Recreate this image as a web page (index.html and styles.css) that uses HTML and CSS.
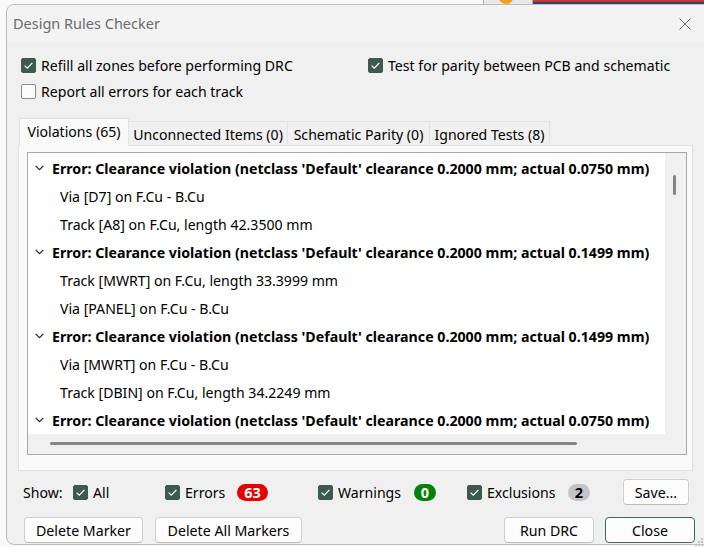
FILE: index.html
```html
<!DOCTYPE html>
<html>
<head>
<meta charset="utf-8">
<link rel="stylesheet" href="styles.css">
</head>
<body>
<div class="desk-app"><span class="desk-icon"></span></div>
<div class="desk-bar"></div>

<div class="window">
  <div class="titlebar">
    <span class="title">Design Rules Checker</span>
    <span class="close-btn">
      <svg width="12" height="12" viewBox="0 0 12 12"><path d="M0.5 0.5 L11.5 11.5 M11.5 0.5 L0.5 11.5" stroke="#6b6b6b" stroke-width="1" fill="none"/></svg>
    </span>
  </div>
  <div class="body">
    <div class="options">
      <div class="opt-col">
        <label class="cb"><span class="box on"><svg width="15" height="15" viewBox="0 0 15 15"><path d="M3.6 7.6 L6.3 10.2 L11.4 4.8" stroke="#fff" stroke-width="1.2" fill="none"/></svg></span>Refill all zones before performing DRC</label>
        <label class="cb"><span class="box"></span>Report all errors for each track</label>
      </div>
      <div class="opt-col">
        <label class="cb"><span class="box on"><svg width="15" height="15" viewBox="0 0 15 15"><path d="M3.6 7.6 L6.3 10.2 L11.4 4.8" stroke="#fff" stroke-width="1.2" fill="none"/></svg></span>Test for parity between PCB and schematic</label>
      </div>
    </div>

    <div class="tabs">
      <div class="tab active t1">Violations (65)</div>
      <div class="tab t2">Unconnected Items (0)</div>
      <div class="tab t3">Schematic Parity (0)</div>
      <div class="tab t4">Ignored Tests (8)</div>
    </div>

    <div class="panel">
      <div class="listbox">
        <div class="list-main">
          <div class="rows">
            <div class="row err"><svg class="chev" width="9" height="6" viewBox="0 0 9 6"><path d="M0.7 0.8 L4.5 4.6 L8.3 0.8" stroke="#222" stroke-width="1.2" fill="none"/></svg>Error: Clearance violation (netclass 'Default' clearance 0.2000 mm; actual 0.0750 mm)</div>
            <div class="row item">Via [D7] on F.Cu - B.Cu</div>
            <div class="row item">Track [A8] on F.Cu, length 42.3500 mm</div>
            <div class="row err"><svg class="chev" width="9" height="6" viewBox="0 0 9 6"><path d="M0.7 0.8 L4.5 4.6 L8.3 0.8" stroke="#222" stroke-width="1.2" fill="none"/></svg>Error: Clearance violation (netclass 'Default' clearance 0.2000 mm; actual 0.1499 mm)</div>
            <div class="row item">Track [MWRT] on F.Cu, length 33.3999 mm</div>
            <div class="row item">Via [PANEL] on F.Cu - B.Cu</div>
            <div class="row err"><svg class="chev" width="9" height="6" viewBox="0 0 9 6"><path d="M0.7 0.8 L4.5 4.6 L8.3 0.8" stroke="#222" stroke-width="1.2" fill="none"/></svg>Error: Clearance violation (netclass 'Default' clearance 0.2000 mm; actual 0.1499 mm)</div>
            <div class="row item">Via [MWRT] on F.Cu - B.Cu</div>
            <div class="row item">Track [DBIN] on F.Cu, length 34.2249 mm</div>
            <div class="row err"><svg class="chev" width="9" height="6" viewBox="0 0 9 6"><path d="M0.7 0.8 L4.5 4.6 L8.3 0.8" stroke="#222" stroke-width="1.2" fill="none"/></svg>Error: Clearance violation (netclass 'Default' clearance 0.2000 mm; actual 0.0750 mm)</div>
          </div>
          <div class="vscroll"><div class="vthumb"></div></div>
        </div>
        <div class="hscroll"><div class="hthumb"></div></div>
      </div>
    </div>

    <div class="show-row">
      <span class="show-label">Show:</span>
      <label class="cb"><span class="box on"><svg width="15" height="15" viewBox="0 0 15 15"><path d="M3.6 7.6 L6.3 10.2 L11.4 4.8" stroke="#fff" stroke-width="1.2" fill="none"/></svg></span>All</label>
      <label class="cb"><span class="box on"><svg width="15" height="15" viewBox="0 0 15 15"><path d="M3.6 7.6 L6.3 10.2 L11.4 4.8" stroke="#fff" stroke-width="1.2" fill="none"/></svg></span>Errors</label>
      <span class="badge-cell"><span class="badge red">63</span></span>
      <label class="cb"><span class="box on"><svg width="15" height="15" viewBox="0 0 15 15"><path d="M3.6 7.6 L6.3 10.2 L11.4 4.8" stroke="#fff" stroke-width="1.2" fill="none"/></svg></span>Warnings</label>
      <span class="badge-cell"><span class="badge green">0</span></span>
      <label class="cb"><span class="box on"><svg width="15" height="15" viewBox="0 0 15 15"><path d="M3.6 7.6 L6.3 10.2 L11.4 4.8" stroke="#fff" stroke-width="1.2" fill="none"/></svg></span>Exclusions</label>
      <span class="badge-cell"><span class="badge gray">2</span></span>
      <button class="btn save">Save...</button>
    </div>

    <div class="btn-row">
      <div class="btn-group">
        <button class="btn w-del">Delete Marker</button>
        <button class="btn w-delall">Delete All Markers</button>
      </div>
      <div class="btn-group">
        <button class="btn w-run">Run DRC</button>
        <button class="btn w-close default">Close</button>
      </div>
    </div>
  </div>
</div>

<svg class="grip" width="10" height="10" viewBox="0 0 10 10">
  <rect x="7" y="1" width="2" height="2" fill="#c4c4c4"/>
  <rect x="4" y="4" width="2" height="2" fill="#c4c4c4"/>
  <rect x="7" y="4" width="2" height="2" fill="#c4c4c4"/>
  <rect x="1" y="7" width="2" height="2" fill="#c4c4c4"/>
  <rect x="4" y="7" width="2" height="2" fill="#c4c4c4"/>
  <rect x="7" y="7" width="2" height="2" fill="#c4c4c4"/>
</svg>
</body>
</html>
```

FILE: styles.css
```css
* { box-sizing: border-box; }
html, body { margin: 0; padding: 0; }
body {
  width: 704px;
  height: 547px;
  overflow: hidden;
  position: relative;
  background: #f9f9f9;
  font-family: "Noto Sans", "Open Sans", sans-serif;
  font-size: 14.1px;
  color: #000;
}

/* desktop fragments peeking above the dialog */
.desk-app {
  position: absolute;
  left: 483px;
  top: 0;
  width: 50px;
  height: 6px;
  background: #e9e9e9;
  border-left: 1px solid #b0b0b0;
  border-right: 1px solid #b0b0b0;
  overflow: hidden;
}
.desk-icon {
  position: absolute;
  left: 15px;
  top: -8px;
  width: 14px;
  height: 12px;
  border-radius: 50%;
  background: #f0a020;
}
.desk-bar {
  position: absolute;
  left: 533px;
  top: 0;
  width: 171px;
  height: 6px;
  background: linear-gradient(#c8363a 0 2px, #2d4468 2px 6px);
}

/* dialog window */
.window {
  position: absolute;
  left: 6px;
  top: 4px;
  width: 720px;
  height: 541px;
  background: #f0f0f0;
  border: 1px solid #bdbdbd;
  border-radius: 8px;
  display: flex;
  flex-direction: column;
}
.titlebar {
  height: 37px;
  display: flex;
  align-items: center;
  padding-left: 6px;
  background: #f3f3f3;
  border-radius: 8px 8px 0 0;
}
.title {
  flex: 1;
  color: #6b6b6b;
  font-size: 14.5px;
  padding-bottom: 1px;
}
.close-btn {
  width: 46px;
  height: 37px;
  margin-right: 17px;
  display: flex;
  align-items: center;
  justify-content: center;
  padding-top: 1px;
}

.body {
  padding-left: 11px;
  display: flex;
  flex-direction: column;
}

/* checkbox */
.cb {
  display: flex;
  align-items: center;
  height: 26px;
  white-space: nowrap;
}
.box {
  width: 15px;
  height: 15px;
  border: 1px solid #8a8a8a;
  border-radius: 2px;
  background: #fbfbfb;
  margin-right: 5px;
  flex: none;
  position: relative;
}
.box.on {
  background: #3e5a50;
  border-color: #3e5a50;
}
.box svg {
  position: absolute;
  left: -1px;
  top: -1px;
}

.options {
  display: grid;
  grid-template-columns: 347px auto;
  padding-top: 10px;
  padding-left: 3px;
}

/* tabs */
.tabs {
  display: flex;
  align-items: flex-end;
  height: 28px;
  margin-top: 14px;
  margin-left: 1px;
  margin-bottom: -1px;
  position: relative;
  z-index: 1;
}
.tab {
  height: 24px;
  margin-bottom: 1px;
  background: #f0f0f0;
  border: 1px solid #e2e2e2;
  border-bottom: none;
  border-left: none;
  display: flex;
  align-items: center;
  justify-content: center;
  white-space: nowrap;
  padding-top: 1px;
}
.tab.active {
  height: 28px;
  margin-bottom: 0;
  background: #f9f9f9;
  border-left: 1px solid #e2e2e2;
  padding-top: 0;
  padding-bottom: 2px;
}
.t1 { width: 110px; }
.t2 { width: 159px; }
.t3 { width: 142px; }
.t4 { width: 120px; }

.panel {
  width: 675px;
  height: 326px;
  background: #f9f9f9;
  border: 1px solid #e2e2e2;
  padding: 6px 0 0 8px;
}
.listbox {
  width: 660px;
  height: 303px;
  border: 1px solid #a8a8a8;
  background: #fff;
  display: flex;
  flex-direction: column;
}
.list-main {
  height: 281px;
  display: flex;
}
.rows {
  flex: 1;
  overflow: hidden;
  padding-top: 1px;
}
.row {
  height: 28px;
  display: flex;
  align-items: center;
  white-space: nowrap;
}
.row.err {
  font-weight: bold;
  font-size: 14.2px;
  padding-left: 7px;
}
.chev {
  margin-right: 8px;
  flex: none;
}
.row.item {
  padding-left: 32px;
}
.vscroll {
  width: 21px;
  background: #f0f0f0;
  padding-top: 22px;
}
.vthumb {
  margin-left: 8px;
  width: 3px;
  height: 20px;
  background: #858585;
  border-radius: 2px;
}
.hscroll {
  height: 20px;
  background: #f0f0f0;
  padding-top: 8px;
}
.hthumb {
  margin-left: 22px;
  width: 527px;
  height: 3px;
  background: #858585;
  border-radius: 2px;
}

/* show row */
.show-row {
  margin-top: 8px;
  height: 26px;
  display: grid;
  grid-template-columns: 55px 92px 72px 81px 96px 53px 101px 55px 66px;
  align-items: center;
}
.show-label {
  padding-left: 5px;
}
.badge-cell {
  display: flex;
  align-items: center;
}
.badge {
  height: 17px;
  border-radius: 9px;
  font-weight: bold;
  font-size: 14.5px;
  display: flex;
  align-items: center;
  justify-content: center;
  line-height: 1;
}
.badge.red { width: 31px; background: #e60000; color: #fff; }
.badge.green { width: 22px; background: #078007; color: #fff; }
.badge.gray { width: 22px; background: #c4c4c4; color: #000; }

.btn {
  height: 26px;
  background: #fdfdfd;
  border: 1px solid #d0d0d0;
  border-bottom-color: #bcbcbc;
  border-radius: 4px;
  font-family: inherit;
  font-size: 14.2px;
  color: #000;
  padding: 0;
  display: flex;
  align-items: center;
  justify-content: center;
}
.save { width: 66px; }

.btn-row {
  margin-top: 12px;
  width: 677px;
  padding-left: 6px;
  display: flex;
  justify-content: space-between;
}
.btn-group {
  display: flex;
  gap: 12px;
}
.btn-group + .btn-group { gap: 11px; }
.w-del { width: 119px; }
.w-delall { width: 147px; }
.w-run { width: 90px; }
.w-close { width: 90px; }
.btn.default {
  border: 1px solid #4a665c;
}

.grip {
  position: absolute;
  right: 0;
  bottom: 0;
}
```
